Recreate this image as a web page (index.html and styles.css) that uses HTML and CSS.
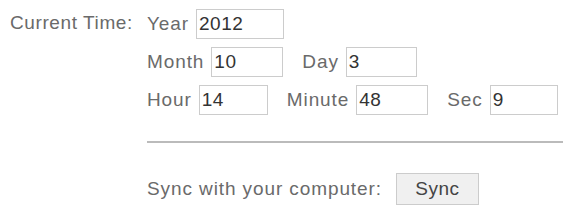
FILE: index.html
```html
<!DOCTYPE html>
<html lang="en">

<head>
  <meta charset="UTF-8">
  <title>Current Time</title>
  <link rel="stylesheet" href="styles.css">
</head>

<body>
  <div class="clock">
    <div class="caption">Current Time:</div>
    <div class="fields">
      <div class="row">
        <label>Year <input class="year" type="text" value="2012"></label>
      </div>
      <div class="row">
        <label>Month <input class="month" type="text" value="10"></label>
        <label>Day <input class="day" type="text" value="3"></label>
      </div>
      <div class="row">
        <label>Hour <input class="hour" type="text" value="14"></label>
        <label>Minute <input class="minute" type="text" value="48"></label>
        <label>Sec <input class="sec" type="text" value="9"></label>
      </div>
      <hr>
      <div class="sync">
        <span>Sync with your computer:</span>
        <button type="button">Sync</button>
      </div>
    </div>
  </div>
</body>

</html>
```

FILE: styles.css
```css
html {
  background: white;
}

body {
  margin: 0;
  font-family: "Liberation Sans", Arial, sans-serif;
  font-size: 19px;
  letter-spacing: 0.9px;
  color: #6a6a6a;
}

.clock {
  display: flex;
  padding: 8px 0 0 10px;
}

.caption {
  flex-shrink: 0;
  width: 137px;
  padding-top: 4px;
  letter-spacing: 0.6px;
}

.fields {
  flex: 1;
  min-width: 0;
}

.row {
  display: flex;
  align-items: center;
  height: 31px;
  margin-bottom: 7px;
}

.row label {
  display: flex;
  align-items: center;
  margin-right: 19px;
}

input[type="text"] {
  box-sizing: border-box;
  height: 30px;
  margin-left: 7px;
  padding: 0 2px;
  border: 1px solid #ccc;
  font-family: inherit;
  font-size: 19px;
  letter-spacing: 0.5px;
  color: #333;
}

.year { width: 88px; margin-left: 9px; }
.month { width: 72px; }
.day { width: 71px; }
.hour { width: 69px; }
.minute { width: 72px; }
.sec { width: 68px; }

hr {
  margin: 26px 2px 0 0;
  border: 0;
  border-top: 2px solid #bbb;
}

.sync {
  display: flex;
  align-items: center;
  margin-top: 30px;
}

button {
  margin-left: 14px;
  width: 83px;
  height: 32px;
  background: #f0f0f0;
  border: 1px solid #ccc;
  font-family: inherit;
  font-size: 19px;
  letter-spacing: 0.5px;
  color: #444;
}
```
